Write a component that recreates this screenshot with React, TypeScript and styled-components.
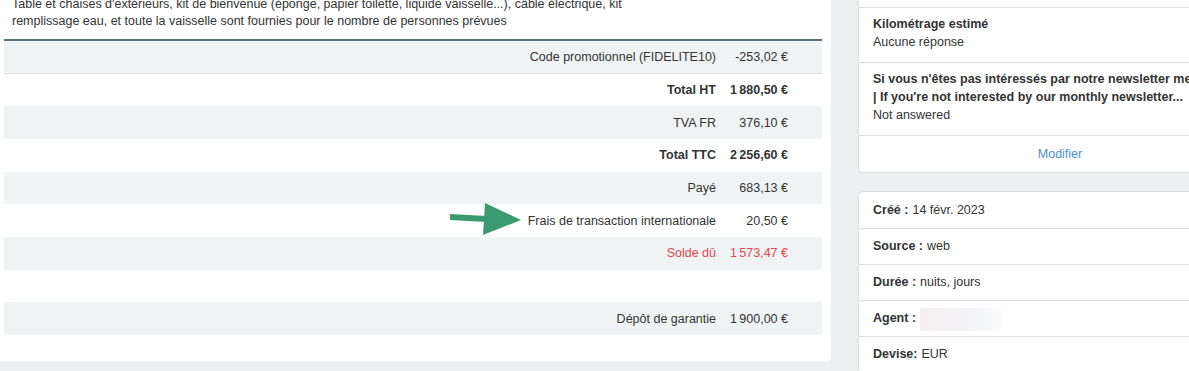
import styled, { createGlobalStyle } from "styled-components";

const GlobalStyle = createGlobalStyle`
  html, body {
    margin: 0;
    padding: 0;
    overflow: hidden;
    background: #ecf0f1;
  }
  body {
    font-family: "Liberation Sans", Arial, sans-serif;
    font-size: 12.5px;
    color: #333;
  }
`;

type Tone = "normal" | "bold" | "danger";

interface Line {
  label: string;
  value: string;
  tone?: Tone;
}

// espace fine insécable pour les milliers, insécable avant €
const eur = (s: string) => s.replace(" ", "\u202F") + "\u00A0€";

const lines: (Line | null)[] = [
  { label: "Code promotionnel (FIDELITE10)", value: eur("-253,02") },
  { label: "Total HT", value: eur("1 880,50"), tone: "bold" },
  { label: "TVA FR", value: eur("376,10") },
  { label: "Total TTC", value: eur("2 256,60"), tone: "bold" },
  { label: "Payé", value: eur("683,13") },
  { label: "Frais de transaction internationale", value: eur("20,50") },
  { label: "Solde dû", value: eur("1 573,47"), tone: "danger" },
  null,
  { label: "Dépôt de garantie", value: eur("1 900,00") },
];

const infos = [
  { label: "Créé :", value: "14 févr. 2023" },
  { label: "Source :", value: "web" },
  { label: "Durée :", value: "nuits, jours" },
  { label: "Agent :", value: "", hidden: true },
  { label: "Devise:", value: "EUR" },
];

const App = () => {
  return (
    <>
      <GlobalStyle />
      <Page>
        <MainCard>
          <Description>
            Table et chaises d'extérieurs, kit de bienvenue (éponge, papier toilette, liquide vaisselle...), câble électrique, kit
            <br />
            remplissage eau, et toute la vaisselle sont fournies pour le nombre de personnes prévues
          </Description>
          <Totals>
            {lines.map((line, i) => (
              <Row key={i} $shade={i % 2 === 0} $divider={i === 0} $tone={line?.tone ?? "normal"}>
                <Label>{line?.label}</Label>
                <Value>{line?.value}</Value>
              </Row>
            ))}
          </Totals>
          <Arrow width="76" height="38" viewBox="0 0 76 38">
            <polygon points="2,14 39,16 39,22 2,20" />
            <polygon points="37,3 73,20 35,35" />
          </Arrow>
        </MainCard>

        <Side>
          <Card $continued>
            <Item>
              <Question>Kilométrage estimé</Question>
              <div>Aucune réponse</div>
            </Item>
            <Item>
              <Question>Si vous n'êtes pas intéressés par notre newsletter mensuelle</Question>
              <Question>| If you're not interested by our monthly newsletter...</Question>
              <div>Not answered</div>
            </Item>
            <Item $center>
              <Link href="#">Modifier</Link>
            </Item>
          </Card>

          <Card>
            {infos.map((info) => (
              <InfoItem key={info.label}>
                <strong>{info.label}</strong> {info.hidden ? <Redacted /> : info.value}
              </InfoItem>
            ))}
          </Card>
        </Side>
      </Page>
    </>
  );
};

const Page = styled.div`
  display: flex;
  align-items: flex-start;
  gap: 27px;
  width: 1262px;
  height: 371px;
`;

const MainCard = styled.div`
  position: relative;
  width: 831px;
  flex-shrink: 0;
  box-sizing: border-box;
  padding: 0 9px 26px 4px;
  background: #fff;
  border-radius: 0 0 4px 0;
`;

const Description = styled.p`
  margin: -4px 0 9px;
  padding: 0 8px;
  line-height: 17px;
  white-space: nowrap;
`;

const Totals = styled.div`
  border-top: 2px solid #5d7179;
`;

const Row = styled.div<{ $shade: boolean; $divider: boolean; $tone: Tone }>`
  display: grid;
  grid-template-columns: 1fr 72px;
  align-items: center;
  box-sizing: border-box;
  height: 32.67px;
  padding-right: 34px;
  background: ${(p) => (p.$shade ? "#f0f3f4" : "#fff")};
  border-bottom: ${(p) => (p.$divider ? "1px solid #dddddd" : "none")};
  font-weight: ${(p) => (p.$tone === "bold" ? 700 : 400)};
  color: ${(p) => (p.$tone === "danger" ? "#e5454f" : "#333")};
  white-space: nowrap;
`;

const Label = styled.span`
  text-align: right;
`;

const Value = styled.span`
  text-align: right;
`;

const Arrow = styled.svg`
  position: absolute;
  left: 448px;
  top: 200px;
  fill: #3d9970;
`;

const Side = styled.div`
  display: flex;
  flex-direction: column;
  gap: 18px;
  width: 404px;
  flex-shrink: 0;
`;

const Card = styled.div<{ $continued?: boolean }>`
  background: #fff;
  border: 1px solid #dddddd;
  border-top: ${(p) => (p.$continued ? "none" : "1px solid #dddddd")};
  border-radius: ${(p) => (p.$continued ? "0 0 4px 4px" : "4px")};
  padding-top: ${(p) => (p.$continued ? "7px" : "0")};
  overflow: hidden;
`;

const Item = styled.div<{ $center?: boolean }>`
  padding: ${(p) => (p.$center ? "10px 14px" : "7px 14px 11px")};
  line-height: ${(p) => (p.$center ? "16px" : "18px")};
  border-top: 1px solid #dddddd;
  text-align: ${(p) => (p.$center ? "center" : "left")};
  white-space: nowrap;
`;

const Question = styled.div`
  font-weight: 700;
`;

const Link = styled.a`
  color: #4a90d0;
  text-decoration: none;
`;

const InfoItem = styled.div`
  display: flex;
  align-items: center;
  gap: 4px;
  height: 36px;
  box-sizing: border-box;
  padding: 0 14px 1px;
  border-top: 1px solid #dddddd;
  white-space: pre;
  &:first-child {
    border-top: none;
  }
`;

const Redacted = styled.span`
  display: inline-block;
  width: 83px;
  height: 23px;
  margin-top: 2px;
  background: linear-gradient(90deg, #f4eeef 0%, #f3f2f4 45%, #f5f6f8 75%, #fbfbfc 100%);
`;

export default App;
